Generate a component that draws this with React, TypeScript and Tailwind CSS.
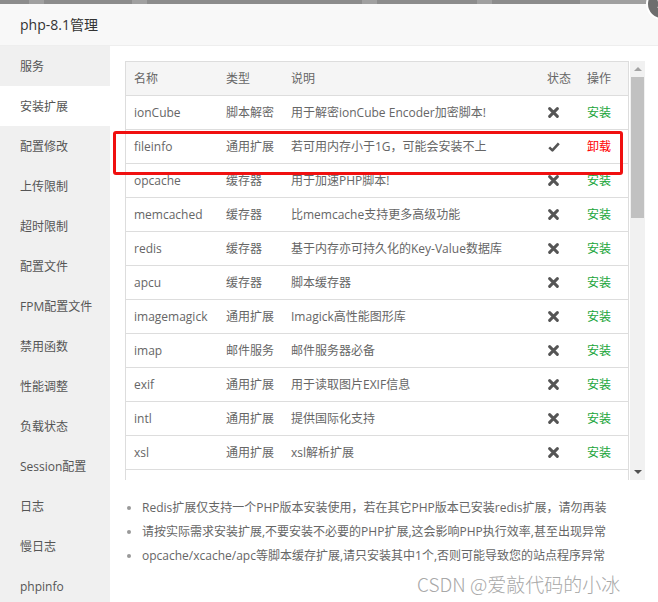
import React from "react";

const menu = [
  "服务",
  "安装扩展",
  "配置修改",
  "上传限制",
  "超时限制",
  "配置文件",
  "FPM配置文件",
  "禁用函数",
  "性能调整",
  "负载状态",
  "Session配置",
  "日志",
  "慢日志",
  "phpinfo",
];

type Ext = { name: string; type: string; desc: string; installed: boolean };

const exts: Ext[] = [
  { name: "ionCube", type: "脚本解密", desc: "用于解密ionCube Encoder加密脚本!", installed: false },
  { name: "fileinfo", type: "通用扩展", desc: "若可用内存小于1G，可能会安装不上", installed: true },
  { name: "opcache", type: "缓存器", desc: "用于加速PHP脚本!", installed: false },
  { name: "memcached", type: "缓存器", desc: "比memcache支持更多高级功能", installed: false },
  { name: "redis", type: "缓存器", desc: "基于内存亦可持久化的Key-Value数据库", installed: false },
  { name: "apcu", type: "缓存器", desc: "脚本缓存器", installed: false },
  { name: "imagemagick", type: "通用扩展", desc: "Imagick高性能图形库", installed: false },
  { name: "imap", type: "邮件服务", desc: "邮件服务器必备", installed: false },
  { name: "exif", type: "通用扩展", desc: "用于读取图片EXIF信息", installed: false },
  { name: "intl", type: "通用扩展", desc: "提供国际化支持", installed: false },
  { name: "xsl", type: "通用扩展", desc: "xsl解析扩展", installed: false },
];

const notes = [
  "Redis扩展仅支持一个PHP版本安装使用，若在其它PHP版本已安装redis扩展，请勿再装",
  "请按实际需求安装扩展,不要安装不必要的PHP扩展,这会影响PHP执行效率,甚至出现异常",
  "opcache/xcache/apc等脚本缓存扩展,请只安装其中1个,否则可能导致您的站点程序异常",
];

const Cross = () => (
  <svg width="11" height="11" viewBox="0 0 10 10">
    <path d="M1.5 1.5L8.5 8.5M8.5 1.5L1.5 8.5" stroke="#555" strokeWidth="2.7" strokeLinecap="round" />
  </svg>
);

const Check = () => (
  <svg width="12" height="10" viewBox="0 0 12 10">
    <path d="M1.2 5.4L4.4 8.4L10.8 1.4" stroke="#555" strokeWidth="2.6" fill="none" strokeLinejoin="round" />
  </svg>
);

const cols = "grid grid-cols-[91px_65px_256px_40px_50px]";

export default function App() {
  return (
    <div className="relative w-[658px] h-[602px] overflow-hidden bg-white font-['Open_Sans','Noto_Sans_CJK_SC',sans-serif] text-[12px] text-[#666]">
      {/* dimmed page behind the layer */}
      <div className="flex h-[4px] bg-[#8c8c8c]">
        <div className="w-[29px]" />
        <div className="w-[15px] bg-[#a0a0a0]" />
        <div className="w-[88px]" />
        <div className="w-[15px] bg-[#a0a0a0]" />
        <div className="w-[215px]" />
        <div className="w-[15px] bg-[#a0a0a0]" />
        <div className="w-[100px]" />
        <div className="w-[15px] bg-[#a0a0a0]" />
        <div className="w-[88px]" />
        <div className="flex-1 bg-[#a0a0a0]" />
      </div>

      <div className="h-[42px] bg-[#f8f8f8] border-b border-[#eee] flex items-center pl-5 text-[14px] text-[#333]">
        php-8.1管理
      </div>

      <div className="flex h-[556px]">
        <div className="w-[110px] shrink-0 bg-[#f0f0f0] text-[#555]">
          {menu.map((m, i) => (
            <div key={m} className={`h-10 flex items-center pl-5 pt-px ${i === 1 ? "bg-white" : ""}`}>
              {m}
            </div>
          ))}
        </div>

        <div className="flex-1 pl-[15px] pt-[15px]">
          <div className="flex h-[419px]">
            <div className="w-[504px] border-l border-t border-r border-[#ddd] overflow-hidden">
              <div className={`${cols} h-[34px] items-center bg-[#f5f5f5] border-b border-[#ddd]`}>
                <div className="pl-[8px]">名称</div>
                <div className="pl-[9px]">类型</div>
                <div className="pl-[9px]">说明</div>
                <div className="pl-[9px]">状态</div>
                <div className="pl-[9px]">操作</div>
              </div>
              {exts.map((e) => (
                <div key={e.name} className={`${cols} h-[34px] items-center border-b border-[#ddd]`}>
                  <div className="pl-[8px]">{e.name}</div>
                  <div className="pl-[9px]">{e.type}</div>
                  <div className="pl-[9px] whitespace-nowrap">{e.desc}</div>
                  <div className="pl-[10px] flex items-center">{e.installed ? <Check /> : <Cross />}</div>
                  <div className={`pl-[9px] ${e.installed ? "text-[#f00]" : "text-[#20a53a]"}`}>
                    {e.installed ? "卸载" : "安装"}
                  </div>
                </div>
              ))}
            </div>

            {/* scrollbar */}
            <div className="w-[15px] ml-px bg-[#f1f1f1] flex flex-col">
              <div className="h-[16px] flex items-center justify-center">
                <div className="w-0 h-0 border-l-[4px] border-r-[4px] border-b-[4px] border-l-transparent border-r-transparent border-b-[#a3a3a3]" />
              </div>
              <div className="h-[141px] mx-px bg-[#c1c1c1]" />
              <div className="flex-1" />
              <div className="h-[16px] flex items-center justify-center">
                <div className="w-0 h-0 border-l-[4px] border-r-[4px] border-t-[4px] border-l-transparent border-r-transparent border-t-[#505050]" />
              </div>
            </div>
          </div>

          <ul className="mt-[16px]">
            {notes.map((n) => (
              <li key={n} className="flex items-center h-[24px] whitespace-nowrap">
                <span className="ml-[2px] w-[4px] h-[4px] rounded-full bg-[#999] shrink-0" />
                <span className="ml-[11px]">{n}</span>
              </li>
            ))}
          </ul>
        </div>
      </div>

      {/* annotation box */}
      <div className="absolute left-[113px] top-[131px] w-[510px] h-[44px] border-[3px] border-[#f01010] rounded-[3px]" />

      {/* close button */}
      <div className="absolute left-[646px] top-[-12px] w-[32px] h-[32px] rounded-full bg-[#6e6e6e] border-2 border-white flex items-center justify-center">
        <svg width="10" height="10" viewBox="0 0 10 10">
          <path d="M1 1L9 9M9 1L1 9" stroke="#fff" strokeWidth="2" />
        </svg>
      </div>

      {/* watermark */}
      <div className="absolute left-[417px] top-[570px] text-[19px] text-[#a8a8a8] whitespace-nowrap font-['Noto_Sans_CJK_SC',sans-serif] font-light">
        CSDN @爱敲代码的小冰
      </div>
    </div>
  );
}
